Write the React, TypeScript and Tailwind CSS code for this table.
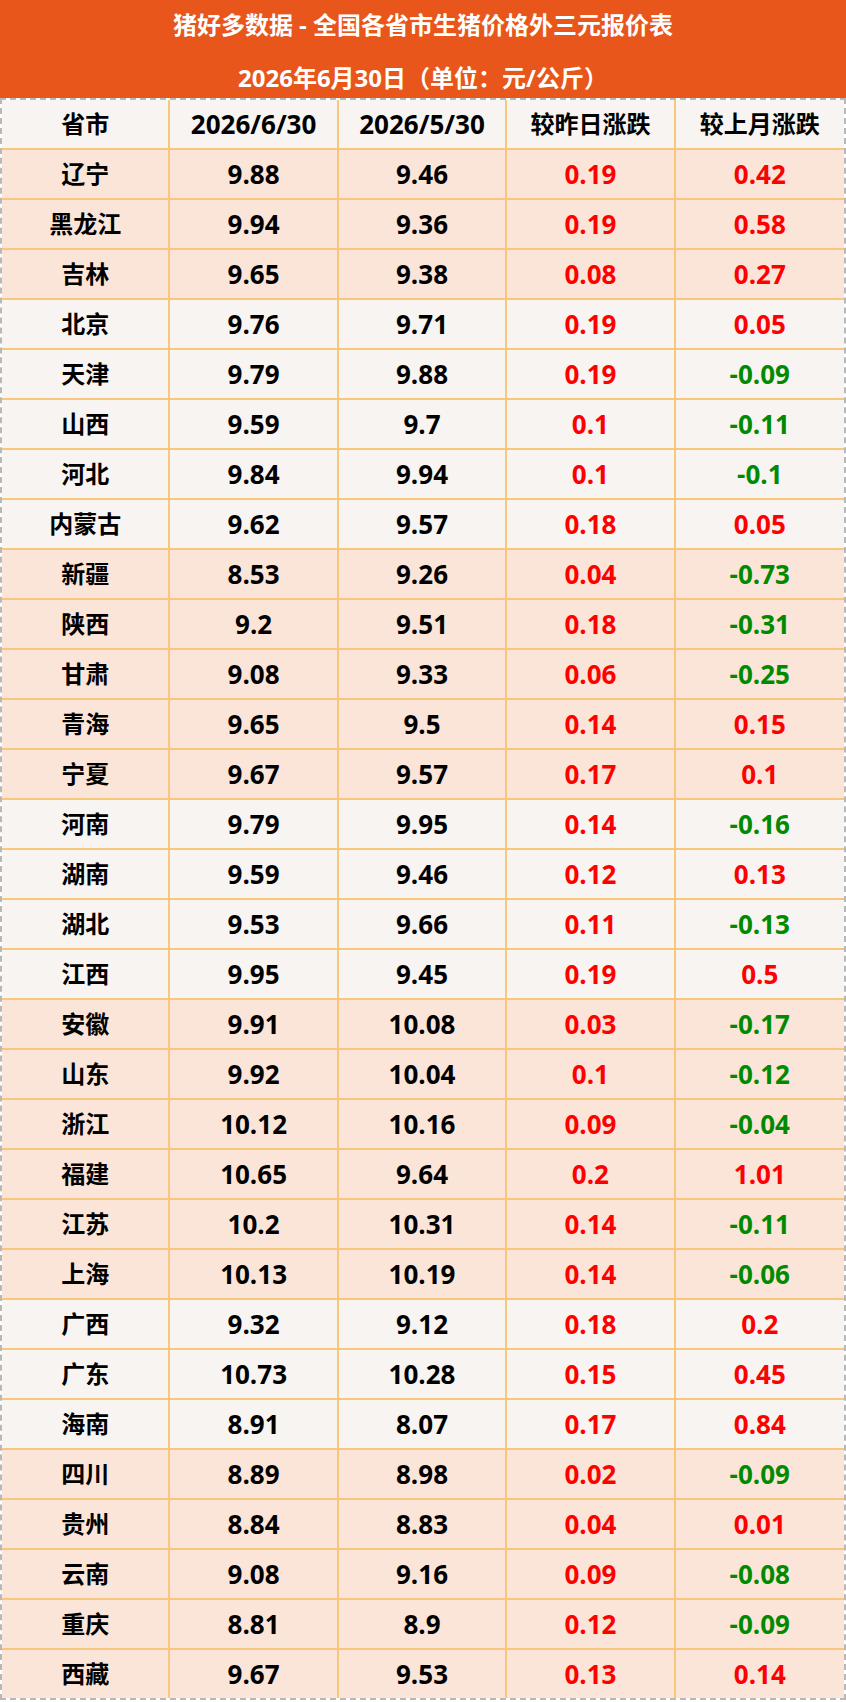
const rows: [string, string, string, string, string, boolean][] = [
  ['辽宁', '9.88', '9.46', '0.19', '0.42', true],
  ['黑龙江', '9.94', '9.36', '0.19', '0.58', true],
  ['吉林', '9.65', '9.38', '0.08', '0.27', true],
  ['北京', '9.76', '9.71', '0.19', '0.05', false],
  ['天津', '9.79', '9.88', '0.19', '-0.09', false],
  ['山西', '9.59', '9.7', '0.1', '-0.11', false],
  ['河北', '9.84', '9.94', '0.1', '-0.1', false],
  ['内蒙古', '9.62', '9.57', '0.18', '0.05', false],
  ['新疆', '8.53', '9.26', '0.04', '-0.73', true],
  ['陕西', '9.2', '9.51', '0.18', '-0.31', true],
  ['甘肃', '9.08', '9.33', '0.06', '-0.25', true],
  ['青海', '9.65', '9.5', '0.14', '0.15', true],
  ['宁夏', '9.67', '9.57', '0.17', '0.1', true],
  ['河南', '9.79', '9.95', '0.14', '-0.16', false],
  ['湖南', '9.59', '9.46', '0.12', '0.13', false],
  ['湖北', '9.53', '9.66', '0.11', '-0.13', false],
  ['江西', '9.95', '9.45', '0.19', '0.5', false],
  ['安徽', '9.91', '10.08', '0.03', '-0.17', true],
  ['山东', '9.92', '10.04', '0.1', '-0.12', true],
  ['浙江', '10.12', '10.16', '0.09', '-0.04', true],
  ['福建', '10.65', '9.64', '0.2', '1.01', true],
  ['江苏', '10.2', '10.31', '0.14', '-0.11', true],
  ['上海', '10.13', '10.19', '0.14', '-0.06', true],
  ['广西', '9.32', '9.12', '0.18', '0.2', false],
  ['广东', '10.73', '10.28', '0.15', '0.45', false],
  ['海南', '8.91', '8.07', '0.17', '0.84', false],
  ['四川', '8.89', '8.98', '0.02', '-0.09', true],
  ['贵州', '8.84', '8.83', '0.04', '0.01', true],
  ['云南', '9.08', '9.16', '0.09', '-0.08', true],
  ['重庆', '8.81', '8.9', '0.12', '-0.09', true],
  ['西藏', '9.67', '9.53', '0.13', '0.14', true],
];

function Change({ v }: { v: string }) {
  const down = v.startsWith('-');
  return <span className={down ? 'text-[#008a00]' : 'text-[#ff0000]'}>{v}</span>;
}

export default function App() {
  return (
    <div
      className="w-[846px] h-[1702px] bg-white font-bold text-black"
      style={{ fontFamily: '"Open Sans", "Noto Sans CJK SC", sans-serif' }}
    >
      <div className="h-[98px] bg-[#e8561c] text-white text-[24px] leading-none">
        <div className="h-[50px] flex items-center justify-center">猪好多数据 - 全国各省市生猪价格外三元报价表</div>
        <div className="h-[48px] pt-[8px] flex items-center justify-center">2026年6月30日（单位：元/公斤）</div>
      </div>

      <div className="border-2 border-dashed border-[#b8b8b8]">
        <div className="grid grid-cols-5 h-[50px] bg-[#f8f4f1] border-b-2 border-[#f8c77d] text-[24px]">
          <div className="flex items-center justify-center border-r-2 border-[#f8c77d]">省市</div>
          <div className="flex items-center justify-center border-r-2 border-[#f8c77d] text-[26px]">2026/6/30</div>
          <div className="flex items-center justify-center border-r-2 border-[#f8c77d] text-[26px]">2026/5/30</div>
          <div className="flex items-center justify-center border-r-2 border-[#f8c77d]">较昨日涨跌</div>
          <div className="flex items-center justify-center">较上月涨跌</div>
        </div>

        {rows.map(([name, cur, prev, day, month, peach], i) => (
          <div
            key={name}
            className={`grid grid-cols-5 text-[26px] ${peach ? 'bg-[#fbe5d9]' : 'bg-[#f8f4f1]'} ${
              i < rows.length - 1 ? 'h-[50px] border-b-2 border-[#f8c77d]' : 'h-[48px]'
            }`}
          >
            <div className="flex items-center justify-center border-r-2 border-[#f8c77d] text-[24px]">{name}</div>
            <div className="flex items-center justify-center border-r-2 border-[#f8c77d]">{cur}</div>
            <div className="flex items-center justify-center border-r-2 border-[#f8c77d]">{prev}</div>
            <div className="flex items-center justify-center border-r-2 border-[#f8c77d]">
              <Change v={day} />
            </div>
            <div className="flex items-center justify-center">
              <Change v={month} />
            </div>
          </div>
        ))}
      </div>
    </div>
  );
}
